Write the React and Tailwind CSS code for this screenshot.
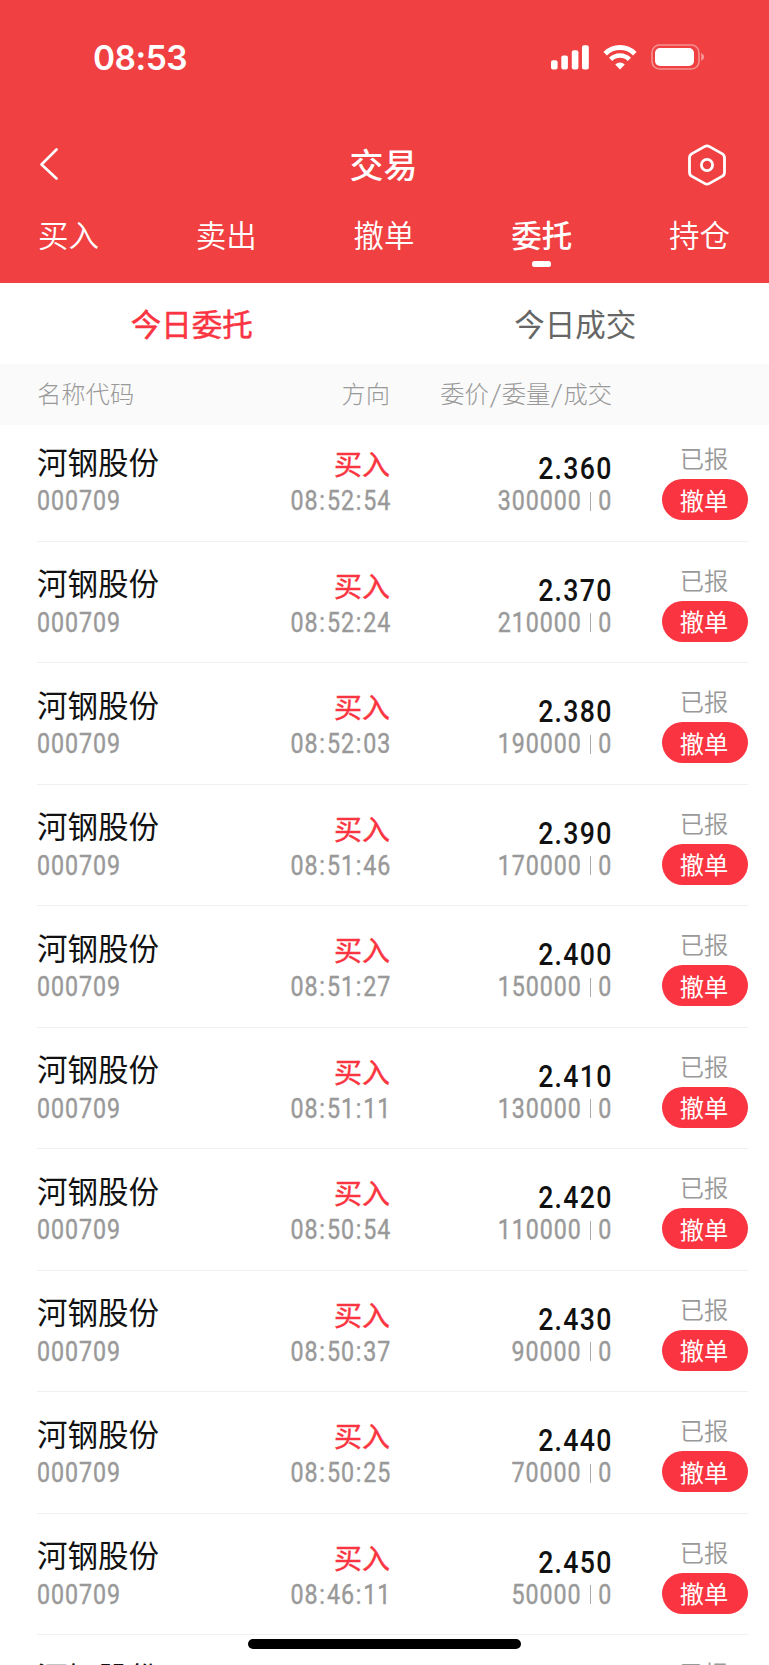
import clsx from "clsx";

const tabs = ["买入", "卖出", "撤单", "委托", "持仓"];

const orders = [
  { time: "08:52:54", price: "2.360", volume: 300000 },
  { time: "08:52:24", price: "2.370", volume: 210000 },
  { time: "08:52:03", price: "2.380", volume: 190000 },
  { time: "08:51:46", price: "2.390", volume: 170000 },
  { time: "08:51:27", price: "2.400", volume: 150000 },
  { time: "08:51:11", price: "2.410", volume: 130000 },
  { time: "08:50:54", price: "2.420", volume: 110000 },
  { time: "08:50:37", price: "2.430", volume: 90000 },
  { time: "08:50:25", price: "2.440", volume: 70000 },
  { time: "08:46:11", price: "2.450", volume: 50000 },
  { time: "08:45:52", price: "2.460", volume: 30000 },
];

export default function App() {
  return (
    <div className="relative h-[1665px] w-[769px] overflow-hidden bg-white font-['Noto_Sans_CJK_SC',sans-serif]">
      <header className="h-[283px] bg-[#f04042] text-white">
        <StatusBar />

        {/* Title bar */}
        <div className="mt-[12px] flex h-[72px] items-center justify-between pl-[39px] pr-[43px]">
          <svg width="40" height="32" viewBox="0 0 40 32" fill="none" className="-mt-[2px]">
            <path
              d="M17.5 1.5 2.5 16.5 17.5 30.5"
              stroke="currentColor"
              strokeWidth="2.6"
              strokeLinecap="round"
              strokeLinejoin="round"
            />
          </svg>
          <h1 className="-mt-[3px] text-[34px] font-medium leading-[72px]">交易</h1>
          <svg width="38" height="42" viewBox="0 0 38 42" fill="none">
            <path
              d="M16.5 2.6Q19 1.2 21.5 2.6L34 9.6Q36.5 11 36.5 13.8V28.2Q36.5 31 34 32.4L21.5 39.4Q19 40.8 16.5 39.4L4 32.4Q1.5 31 1.5 28.2V13.8Q1.5 11 4 9.6Z"
              stroke="currentColor"
              strokeWidth="2.8"
            />
            <circle cx="19" cy="21" r="5.6" stroke="currentColor" strokeWidth="2.8" />
          </svg>
        </div>

        {/* Tabs */}
        <nav className="flex justify-between pl-[38px] pr-[39px]">
          {tabs.map((tab) => (
            <Tab key={tab} label={tab} active={tab === "委托"} />
          ))}
        </nav>
      </header>

      <div className="grid h-[81px] grid-cols-2 pr-[2px] text-center text-[30.5px] leading-[80px]">
        <span className="text-[#fa3541] [-webkit-text-stroke:0.5px_#fa3541]">今日委托</span>
        <span className="text-[#666]">今日成交</span>
      </div>

      <div className="flex h-[61px] bg-[#fafafa] pl-[37px] text-[24.3px] font-light leading-[58px] text-[#999]">
        <span className="w-[155px]">名称代码</span>
        <span className="w-[198px] text-right">方向</span>
        <span className="flex w-[222px] justify-end">
          委价
          <Slash />
          委量
          <Slash />
          成交
        </span>
      </div>

      <div className="-mt-[5px]">
        {orders.map((order) => (
          <OrderRow key={order.time} order={order} />
        ))}
      </div>

      {/* Home indicator */}
      <div className="absolute left-[248px] top-[1639px] h-[10px] w-[273px] rounded-full bg-black" />
    </div>
  );
}

function Slash() {
  return <span className="w-[13px] origin-center scale-x-[1.2] text-center">/</span>;
}

function StatusBar() {
  return (
    <div className="flex h-[117px] items-center justify-between pl-[93px] pr-[64px]">
      <span className="-mt-[2px] font-['Inter'] text-[33.5px] font-semibold leading-10 tracking-[-0.5px]">
        08:53
      </span>
      <div className="-mt-[3px] flex items-center gap-[14px]">
        <svg width="38" height="25" viewBox="0 0 38 25" fill="currentColor">
          <rect x="0" y="15.2" width="6.6" height="9.4" rx="2" />
          <rect x="10.3" y="10.6" width="6.6" height="14" rx="2" />
          <rect x="20.8" y="5.2" width="6.6" height="19.4" rx="2" />
          <rect x="31" y="0.2" width="6.8" height="24.4" rx="2" />
        </svg>
        <svg width="34" height="25" viewBox="0 0 34 25" fill="none" stroke="currentColor">
          <path d="M2.2 8.7A21 21 0 0 1 31.8 8.7" strokeWidth="5" />
          <path d="M7.6 14.4A13.4 13.4 0 0 1 26.4 14.4" strokeWidth="4.6" />
          <path
            d="M17 24.5 12.2 19.5A7 7 0 0 1 21.8 19.5Z"
            fill="currentColor"
            stroke="none"
          />
        </svg>
        <svg width="54" height="26" viewBox="0 0 54 26" fill="none">
          <rect
            x="1"
            y="1"
            width="47"
            height="24"
            rx="7.5"
            stroke="currentColor"
            strokeOpacity="0.42"
            strokeWidth="1.6"
          />
          <rect x="4" y="4" width="39" height="18" rx="5" fill="currentColor" />
          <path d="M50.2 9V17Q53.2 15.6 53.2 13T50.2 9Z" fill="currentColor" fillOpacity="0.45" />
        </svg>
      </div>
    </div>
  );
}

function Tab({ label, active }) {
  return (
    <div className="flex flex-col items-center">
      <span
        className={clsx(
          "text-[30.5px] leading-[66px]",
          active ? "font-medium" : "font-[350]"
        )}
      >
        {label}
      </span>
      {active && <span className="-mt-[6px] h-[6px] w-[19px] rounded-[2.5px] bg-white" />}
    </div>
  );
}

function OrderRow({ order }) {
  return (
    <div className="ml-[37px] mr-[21px] flex h-[121.5px] border-b border-[#f0f0f0] text-[#999]">
      <div className="w-[155px] pt-[20.5px]">
        <div className="whitespace-nowrap text-[30.5px] leading-[40px] text-[#111]">
          河钢股份
        </div>
        <Digits className="mt-[1.5px] origin-left">000709</Digits>
      </div>

      <div className="flex w-[198px] flex-col items-end pt-[25px]">
        <div className="text-[28px] leading-[37px] text-[#fa3541] [-webkit-text-stroke:0.4px_#fa3541]">
          买入
        </div>
        <Digits className="-mr-px origin-right">
          {order.time.split(":").map((part, i) => (
            <span key={i}>
              {i > 0 && <span className="mx-[1.1px]">:</span>}
              {part}
            </span>
          ))}
        </Digits>
      </div>

      <div className="flex w-[221px] flex-col items-end pt-[28px]">
        <div className="-mr-[2px] origin-right scale-x-[0.85] font-['Roboto'] text-[31.4px] font-medium leading-[42px] tracking-[1.5px] text-[#111]">
          {order.price}
        </div>
        <div className="-mt-[8px] flex items-center">
          <Digits className="-mr-px origin-right">{order.volume}</Digits>
          <span className="ml-[9px] mr-[6px] h-[19px] w-px bg-[#aaa]" />
          <Digits className="-ml-px -mr-px origin-right">0</Digits>
        </div>
      </div>

      <div className="ml-auto w-[86px] pt-[20px] text-center text-[24.3px]">
        <div className="pr-[2px] font-[350] leading-[36px]">已报</div>
        <button className="mt-[3px] block h-[41px] w-full rounded-full bg-[#fa3541] pr-[2px] leading-[38px] text-white">
          撤单
        </button>
      </div>
    </div>
  );
}

function Digits({ className, children }) {
  return (
    <div
      className={clsx(
        "w-max scale-x-[0.86] font-['Roboto'] text-[27px] leading-[38px] tracking-[1.1px] [-webkit-text-stroke:0.4px_#999]",
        className
      )}
    >
      {children}
    </div>
  );
}
